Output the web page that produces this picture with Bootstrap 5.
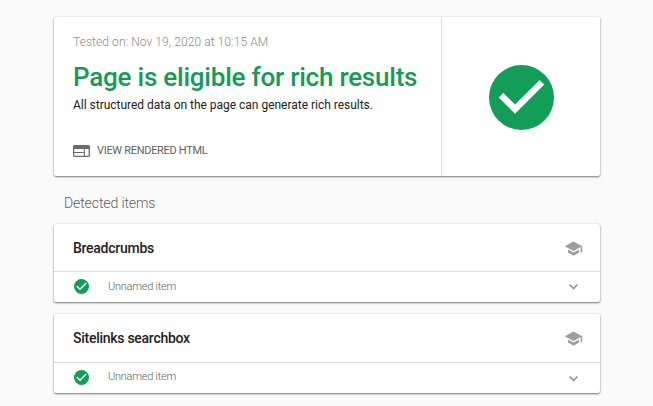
<!DOCTYPE html>
<html lang="en">
<head>
<meta charset="utf-8">
<meta name="viewport" content="width=device-width, initial-scale=1">
<title>Rich Results Test</title>
<link href="https://cdn.jsdelivr.net/npm/bootstrap@5.3.0/dist/css/bootstrap.min.css" rel="stylesheet">
<style>
body{background:#fafafa;font-family:Roboto,"Liberation Sans",sans-serif;color:#212121}
.page{width:546px;margin-left:54px;padding:17px 0 8px}
.panel{border:0;border-radius:2px;box-shadow:0 1px 2px rgba(0,0,0,.5),0 0 2px rgba(0,0,0,.12)}
.summary{height:159px}
.info{width:388px;border-right:1px solid #dcdcdc;padding:17px 0 0 19px;white-space:nowrap}
.status{padding-top:1px}
.tested{font-size:12px;line-height:16px;font-weight:300;color:#8a8a8a;letter-spacing:.08px}
.headline{font-size:26px;line-height:32px;font-weight:500;color:#159b58;margin:11px 0 0;letter-spacing:-.22px}
.desc{font-size:12px;line-height:16px;margin-top:4px;letter-spacing:-.02px}
.view{font-size:11px;line-height:16px;color:#616161;margin-top:30px;letter-spacing:-.3px;gap:7px}
.section-title{font-size:14px;line-height:20px;font-weight:300;color:#616161;margin:17px 0 11px 10px;letter-spacing:-.1px}
.item-head{height:47px;padding:1px 17px 0 19px;font-size:14px;font-weight:500;letter-spacing:-.27px}
.item-head.tall{height:48px;padding-top:0}
.item-row{height:31px;padding:0 17px 1px 20px;border-top:1px solid #dcdcdc;font-size:11px;font-weight:300;color:#616161;letter-spacing:-.24px}
.item-row.last{padding-bottom:2px}
.items-first{margin-bottom:12px}
.items-first .item-name{padding-top:2px}
.item-name{margin-left:19px}
.chev{margin:1px 5px 0 0}
.last .chev{margin-top:3px}
svg{display:block;flex:none}
</style>
</head>
<body>
<svg class="d-none" xmlns="http://www.w3.org/2000/svg">
<symbol id="check" viewBox="0 0 20 20"><circle cx="10" cy="10" r="10" fill="#129d58"/><path d="M8 15 3 10l1.410-1.410L8 12.170l7.590-7.590L17 6z" fill="#fff"/></symbol>
<symbol id="school" viewBox="0 0 24 24"><path fill="#9e9e9e" d="M5 13.180v4L12 21l7-3.820v-4L12 17l-7-3.820zM12 3 1 9l11 6 9-4.910V17h2V9L12 3z"/></symbol>
<symbol id="chevron" viewBox="0 0 12 8"><path fill="#8c8c8c" d="M1.400 0 6 4.600 10.600 0 12 1.400l-6 6-6-6z"/></symbol>
</svg>
<main class="page">
<section class="card panel summary flex-row">
<div class="info">
<div class="tested">Tested on: Nov 19, 2020 at 10:15 AM</div>
<h1 class="headline">Page is eligible for rich results</h1>
<div class="desc">All structured data on the page can generate rich results.</div>
<div class="view d-flex align-items-center">
<svg width="17" height="12" viewBox="0 0 16 12" preserveAspectRatio="none"><path fill="#6b6b6b" fill-rule="evenodd" d="M1.500 0h13A1.500 1.500 0 0 1 16 1.500v9a1.500 1.500 0 0 1-1.500 1.500h-13A1.500 1.500 0 0 1 0 10.500v-9A1.500 1.500 0 0 1 1.500 0zM1.200 4v3h9V4zM1.200 8v2.800h9V8zM11.200 4v6.800h3.500V4z"/></svg>
<span>VIEW RENDERED HTML</span>
</div>
</div>
<div class="status flex-grow-1 d-flex align-items-center justify-content-center"><svg width="65" height="65"><use href="#check"/></svg></div>
</section>
<h2 class="section-title">Detected items</h2>
<section class="card panel items-first">
<div class="item-head d-flex align-items-center justify-content-between"><span>Breadcrumbs</span><svg width="19" height="19"><use href="#school"/></svg></div>
<div class="item-row d-flex align-items-center"><svg width="15" height="15"><use href="#check"/></svg><span class="item-name">Unnamed item</span><svg class="ms-auto chev" width="9" height="6"><use href="#chevron"/></svg></div>
</section>
<section class="card panel">
<div class="item-head tall d-flex align-items-center justify-content-between"><span>Sitelinks searchbox</span><svg width="19" height="19"><use href="#school"/></svg></div>
<div class="item-row last d-flex align-items-center"><svg width="15" height="15"><use href="#check"/></svg><span class="item-name">Unnamed item</span><svg class="ms-auto chev" width="9" height="6"><use href="#chevron"/></svg></div>
</section>
</main>
<script src="https://cdn.jsdelivr.net/npm/bootstrap@5.3.0/dist/js/bootstrap.bundle.min.js"></script>
</body>
</html>
